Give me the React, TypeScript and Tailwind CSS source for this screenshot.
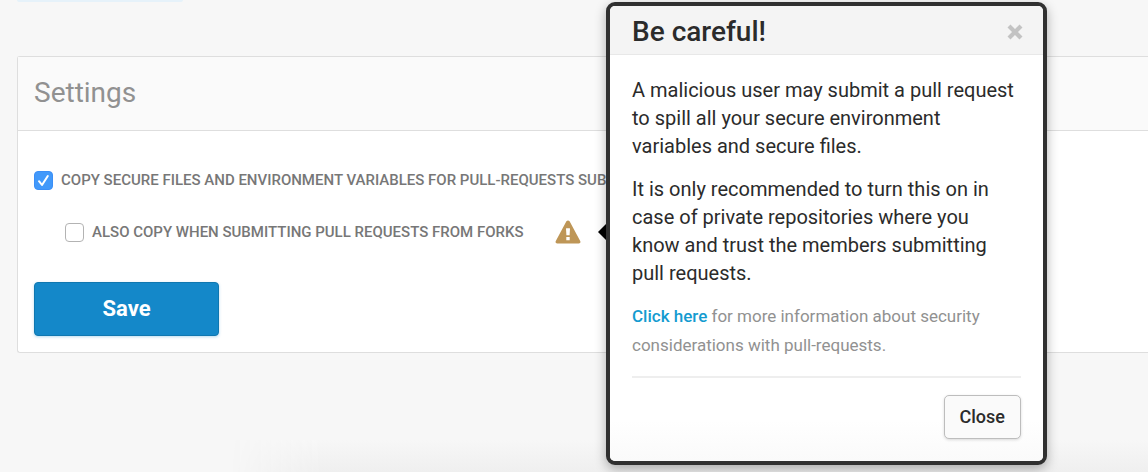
import { useState } from "react";

function WarningIcon() {
  return (
    <svg viewBox="0 0 26 24" className="block h-6 w-[26px]" aria-hidden="true">
      <path
        fillRule="evenodd"
        fill="#be9657"
        d="M11.4 1.3Q13 -.5 14.6 1.3L25.2 20.9Q26.2 23.2 23.8 23.5H2.2Q-.2 23.2.8 20.9ZM11.4 8.2Q11 8.2 11 8.7L11.4 15.2H14.6L15 8.7Q15 8.2 14.6 8.2ZM11.3 17V20.2H14.7V17Z"
      />
    </svg>
  );
}

function CrossIcon() {
  return (
    <svg viewBox="0 0 16 16" className="block size-4" aria-hidden="true">
      <path d="M2 2L14 14M14 2L2 14" stroke="#c3c3c3" strokeWidth="4.2" fill="none" />
    </svg>
  );
}

function CarefulPopover({ onClose }: { onClose: () => void }) {
  return (
    <div
      role="dialog"
      aria-labelledby="careful-title"
      className="absolute -top-[218px] left-[51px] z-10 w-[441px] rounded-[9px] border-4 border-[#303030] bg-white text-[#2b2b2b] shadow-[0_4px_12px_rgba(0,0,0,0.3)]"
    >
      <span className="absolute top-[218px] -left-3 border-y-8 border-r-8 border-y-transparent border-r-black" />
      <header className="flex items-center justify-between rounded-t-[5px] border-b border-[#e8e8e8] bg-[#f4f4f4] pr-5 pl-[22px]">
        <h2 id="careful-title" className="pt-1 text-[28px] leading-[44px] font-medium">
          Be careful!
        </h2>
        <button type="button" aria-label="Dismiss" className="pt-1" onClick={onClose}>
          <CrossIcon />
        </button>
      </header>
      <div className="rounded-b-[5px] bg-linear-to-b from-white from-90% to-[#fafafa] px-[22px] pt-[21px] pb-[22px]">
        <p className="mb-[15px] text-xl leading-7">
          A malicious user may submit a pull request to spill all your secure environment variables and secure files.
        </p>
        <p className="mb-[15px] text-xl leading-7">
          It is only recommended to turn this on in case of private repositories where you know and trust the members
          submitting pull requests.
        </p>
        <p className="text-[17px] leading-[29px] text-[#919191]">
          <a href="#security" className="font-medium text-[#149bd0]">
            Click here
          </a>{" "}
          for more information about security considerations with pull-requests.
        </p>
        <div className="mt-4 flex justify-end border-t-2 border-[#eeeeee] pt-[17px]">
          <button
            type="button"
            onClick={onClose}
            className="rounded-[5px] border border-[#bdbdbd] bg-[#fafafa] px-[15px] text-lg leading-[42px] font-medium shadow-[0_1px_3px_rgba(0,0,0,0.15)]"
          >
            Close
          </button>
        </div>
      </div>
    </div>
  );
}

const boxClass =
  "size-[19px] shrink-0 appearance-none rounded-[4px] border border-[#b3b3b3] bg-white checked:border-[#3b8ff7] checked:bg-[#4299fa]";

export default function App() {
  const [copy, setCopy] = useState(true);
  const [forks, setForks] = useState(false);
  const [open, setOpen] = useState(true);

  return (
    <div className="flex min-h-screen flex-col overflow-hidden bg-[#f7f7f7] font-['Roboto',sans-serif]">
      <div className="mb-[54px] ml-[17px] h-0.5 w-[166px] rounded-b-sm bg-[#e6f2fa]" />
      <main className="ml-[17px] rounded-l-[3px] border-y border-l border-[#dedede] bg-white">
        <header className="border-b border-[#dedede] bg-[#fafafa] pl-4">
          <h1 className="pb-0.5 text-[28px] leading-[71px] text-[#919191]">Settings</h1>
        </header>
        <form className="pt-[35px] pb-4 pl-4" onSubmit={(e) => e.preventDefault()}>
          <label className="flex items-center gap-2 text-[15px] leading-7 font-medium whitespace-nowrap text-[#777777] uppercase">
            <span className="relative flex">
              <input type="checkbox" className={boxClass} checked={copy} onChange={(e) => setCopy(e.target.checked)} />
              {copy && (
                <svg viewBox="0 0 19 19" className="pointer-events-none absolute inset-0 size-[19px]">
                  <path
                    d="M5 10.2L8 14L13.8 5"
                    fill="none"
                    stroke="white"
                    strokeWidth="2"
                    strokeLinecap="round"
                    strokeLinejoin="round"
                  />
                </svg>
              )}
            </span>
            Copy secure files and environment variables for pull-requests submission
          </label>
          <div className="mt-6 flex items-center pl-[31px]">
            <label className="flex w-[471px] items-center gap-2 text-[15px] leading-7 font-medium whitespace-nowrap text-[#777777] uppercase">
              <input type="checkbox" className={boxClass} checked={forks} onChange={(e) => setForks(e.target.checked)} />
              Also copy when submitting pull requests from forks
            </label>
            <div className="relative ml-[19px]">
              <button
                type="button"
                className="block"
                aria-label="Security warning"
                aria-expanded={open}
                onClick={() => setOpen(!open)}
              >
                <WarningIcon />
              </button>
              {open && <CarefulPopover onClose={() => setOpen(false)} />}
            </div>
          </div>
          <button
            type="submit"
            className="mt-9 block w-[185px] rounded-[4px] border border-[#0f77b0] bg-[#1488c9] text-[22px] leading-[52px] font-bold text-white shadow-[0_1px_3px_rgba(20,136,201,0.3)]"
          >
            Save
          </button>
        </form>
      </main>
      <div className="mt-auto ml-[230px] h-8 mask-linear-90 mask-linear-from-transparent mask-linear-from-0% mask-linear-to-black mask-linear-to-10% bg-linear-to-b from-[#f7f7f7] to-[#efefef]" />
    </div>
  );
}
